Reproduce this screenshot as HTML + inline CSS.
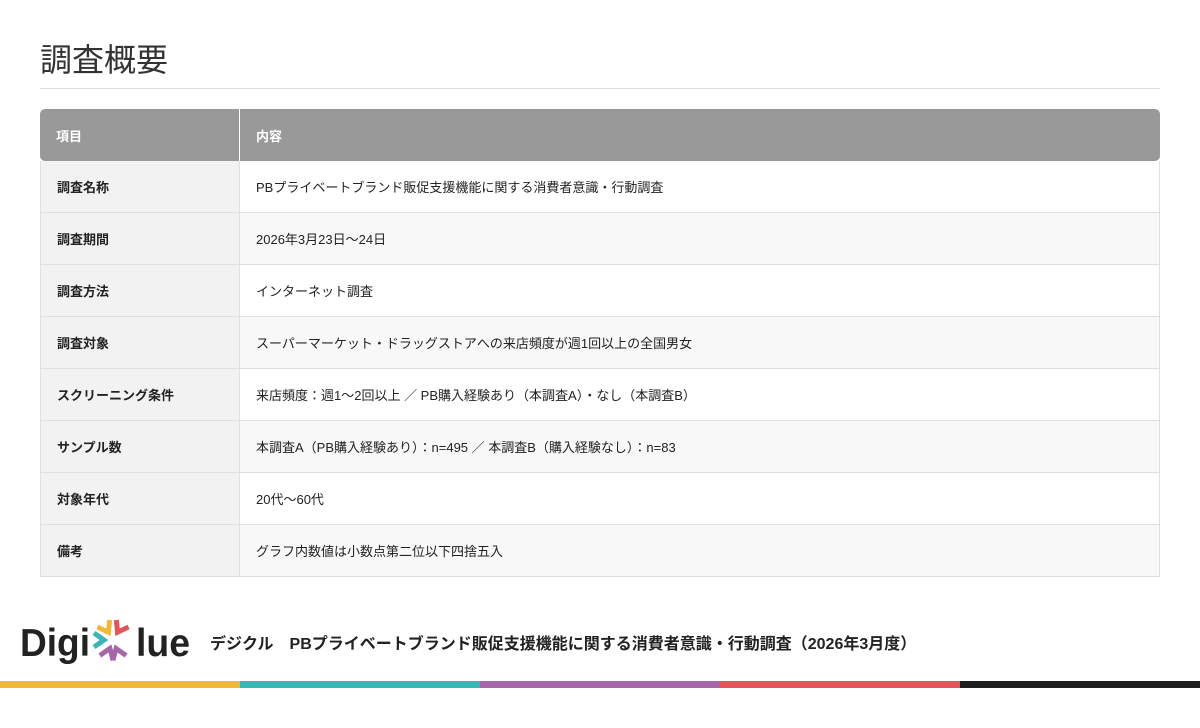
<!DOCTYPE html>
<html><head><meta charset="utf-8"><style>
*{margin:0;padding:0;box-sizing:border-box}
body{width:1200px;height:728px;background:#fff;font-family:"Liberation Sans","Noto Sans CJK JP",sans-serif;color:#222;position:relative;overflow:hidden}
h1{position:absolute;left:40px;top:38px;font-size:32px;font-weight:400;line-height:44px;color:#333}
.rule{position:absolute;left:40px;top:88px;width:1120px;height:1px;background:#e0e0e0}
table{position:absolute;left:40px;top:109px;width:1120px;border-collapse:separate;border-spacing:0;font-size:13px}
th{background:#999;color:#fff;height:52px;text-align:left;padding-left:16px;font-weight:700}
th:first-child{border-radius:5px 0 0 5px;width:200px;border-right:1px solid #fff}
th:last-child{border-radius:0 5px 5px 0}
td{height:52px;padding-left:16px;border-bottom:1px solid #e0e0e0}
td:first-child{background:#f2f2f2;font-weight:700;border-left:1px solid #e0e0e0;border-right:1px solid #e0e0e0}
td:last-child{border-right:1px solid #e0e0e0}
tr:nth-child(even) td:last-child{background:#f8f8f8}
.logo{position:absolute;left:20px;top:616px}
.ft{position:absolute;left:210px;top:630px;font-size:16px;font-weight:700;color:#222}
.bars{position:absolute;left:0;top:681px;width:1200px;height:7px;display:flex}
.bars div{flex:1}
</style></head><body>
<h1>調査概要</h1>
<div class="rule"></div>
<table>
<thead><tr><th>項目</th><th>内容</th></tr></thead>
<tbody>
<tr><td>調査名称</td><td>PBプライベートブランド販促支援機能に関する消費者意識・行動調査</td></tr>
<tr><td>調査期間</td><td>2026年3月23日～24日</td></tr>
<tr><td>調査方法</td><td>インターネット調査</td></tr>
<tr><td>調査対象</td><td>スーパーマーケット・ドラッグストアへの来店頻度が週1回以上の全国男女</td></tr>
<tr><td>スクリーニング条件</td><td>来店頻度：週1～2回以上 ／ PB購入経験あり（本調査A）・なし（本調査B）</td></tr>
<tr><td>サンプル数</td><td>本調査A（PB購入経験あり）：n=495 ／ 本調査B（購入経験なし）：n=83</td></tr>
<tr><td>対象年代</td><td>20代～60代</td></tr>
<tr><td>備考</td><td>グラフ内数値は小数点第二位以下四捨五入</td></tr>
</tbody></table>
<svg class="logo" width="172" height="50" viewBox="0 0 172 50">
<text x="0" y="40" font-family="Liberation Sans" font-weight="700" font-size="39" fill="#222" textLength="70" lengthAdjust="spacingAndGlyphs">Digi</text>
<g fill="none" stroke-width="5" stroke-linejoin="miter">
<path d="M89.6 4 L88.5 16.2 L77.4 11" stroke="#f1b840"/>
<path d="M108.6 11 L97.5 16.2 L96.4 4" stroke="#e0575a"/>
<path d="M74 17 L84 24 L74 31" stroke="#3bb5b5"/>
<path d="M92.9 44.3 L96.1 32.5 L106.1 39.5" stroke="#a667a8"/>
<path d="M79.9 39.5 L89.9 32.5 L93.1 44.3" stroke="#a667a8"/>
</g>
<text x="116" y="40" font-family="Liberation Sans" font-weight="700" font-size="39" fill="#222" textLength="54" lengthAdjust="spacingAndGlyphs">lue</text>
</svg>
<div class="ft">デジクル　PBプライベートブランド販促支援機能に関する消費者意識・行動調査（2026年3月度）</div>
<div class="bars"><div style="background:#f1b840"></div><div style="background:#3bb5b5"></div><div style="background:#a667a8"></div><div style="background:#e0575a"></div><div style="background:#1e1e1e"></div></div>
</body></html>
